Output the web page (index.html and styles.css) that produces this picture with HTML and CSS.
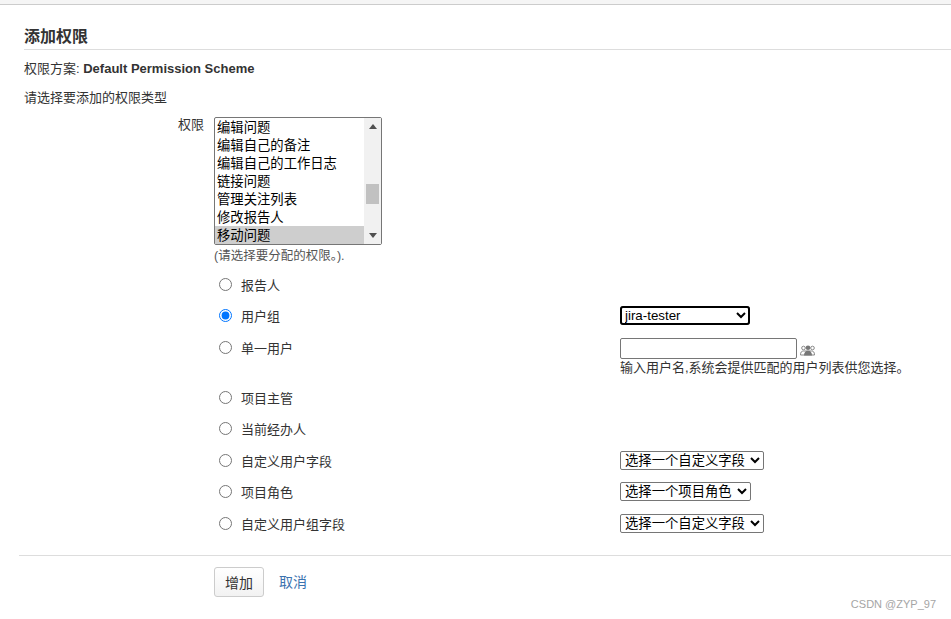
FILE: index.html
```html
<!DOCTYPE html>
<html lang="zh-CN">
<head>
    <meta charset="UTF-8">
    <title>添加权限</title>
    <link rel="stylesheet" href="styles.css">
</head>
<body>
    <div class="topbar"></div>
    <div class="content">
        <h2 class="title">添加权限</h2>
        <p class="scheme">权限方案: <b>Default Permission Scheme</b></p>
        <p class="intro">请选择要添加的权限类型</p>
    </div>
    <form class="perm-form">
        <div class="perm-row">
            <div class="perm-label">权限</div>
            <div class="perm-field">
                <div class="perm-list" role="listbox">
                    <div class="perm-options">
                        <div class="perm-option">编辑问题</div>
                        <div class="perm-option">编辑自己的备注</div>
                        <div class="perm-option">编辑自己的工作日志</div>
                        <div class="perm-option">链接问题</div>
                        <div class="perm-option">管理关注列表</div>
                        <div class="perm-option">修改报告人</div>
                        <div class="perm-option selected">移动问题</div>
                    </div>
                    <div class="scrollbar">
                        <div class="scroll-btn"><span class="arrow-up"></span></div>
                        <div class="scroll-track"><div class="scroll-thumb"></div></div>
                        <div class="scroll-btn"><span class="arrow-down"></span></div>
                    </div>
                </div>
                <div class="perm-hint">(请选择要分配的权限。).</div>
            </div>
        </div>

        <table class="type-table">
            <tr>
                <td class="type-radio"><input type="radio" name="type"></td>
                <td class="type-name">报告人</td>
                <td></td>
            </tr>
            <tr class="row-tall">
                <td class="type-radio"><input type="radio" name="type" checked></td>
                <td class="type-name">用户组</td>
                <td class="type-pick">
                    <select class="pick pick-focus"><option>jira-tester</option></select>
                </td>
            </tr>
            <tr class="row-user">
                <td class="type-radio"><input type="radio" name="type"></td>
                <td class="type-name">单一用户</td>
                <td class="type-pick">
                    <div class="user-line">
                        <input type="text" class="user-input">
                        <svg class="user-icon" width="16" height="11" viewBox="0 0 16 11">
                            <circle cx="3.500" cy="3" r="1.800" fill="#fff" stroke="#888"/>
                            <circle cx="12.500" cy="3" r="1.800" fill="#fff" stroke="#888"/>
                            <path d="M.5 10c0-2.800 1-4 3-4h8c2 0 3 1.200 3 4z" fill="#fff" stroke="#888"/>
                            <circle cx="8" cy="2.800" r="2.300" fill="#777"/>
                            <path d="M4 10.500c0-3 1.500-4.800 4-4.800s4 1.800 4 4.800z" fill="#777"/>
                        </svg>
                    </div>
                    <div class="user-help">输入用户名,系统会提供匹配的用户列表供您选择。</div>
                </td>
            </tr>
            <tr>
                <td class="type-radio"><input type="radio" name="type"></td>
                <td class="type-name">项目主管</td>
                <td></td>
            </tr>
            <tr class="row-tall">
                <td class="type-radio"><input type="radio" name="type"></td>
                <td class="type-name">当前经办人</td>
                <td></td>
            </tr>
            <tr>
                <td class="type-radio"><input type="radio" name="type"></td>
                <td class="type-name">自定义用户字段</td>
                <td class="type-pick"><select class="pick pick-wide"><option>选择一个自定义字段</option></select></td>
            </tr>
            <tr class="row-tall">
                <td class="type-radio"><input type="radio" name="type"></td>
                <td class="type-name">项目角色</td>
                <td class="type-pick"><select class="pick pick-role"><option>选择一个项目角色</option></select></td>
            </tr>
            <tr>
                <td class="type-radio"><input type="radio" name="type"></td>
                <td class="type-name">自定义用户组字段</td>
                <td class="type-pick"><select class="pick pick-wide"><option>选择一个自定义字段</option></select></td>
            </tr>
        </table>

        <div class="actions">
            <button type="button" class="btn">增加</button>
            <a href="#" class="cancel">取消</a>
        </div>
    </form>
    <div class="watermark">CSDN @ZYP_97</div>
</body>
</html>
```

FILE: styles.css
```css
html, body {
    height: 100%;
}
body {
    margin: 0;
    overflow: hidden;
    position: relative;
    background-color: #fff;
    color: #333;
    font-family: "Liberation Sans", "Noto Sans CJK SC", sans-serif;
    font-size: 13px;
    line-height: 18px;
}
.topbar {
    height: 4px;
    background-color: #f5f5f5;
    border-bottom: 1px solid #ccc;
}
.content {
    padding-left: 24px;
}
.title {
    margin: 0;
    padding-top: 22px;
    height: 22px;
    line-height: 20px;
    font-size: 16px;
    color: #333;
    border-bottom: 1px solid #ddd;
}
.scheme {
    margin: 10px 0 0;
}
.intro {
    margin: 11px 0 0;
}

.perm-row {
    display: flex;
    margin-top: 10px;
}
.perm-label {
    width: 204px;
    margin-top: -1px;
    text-align: right;
}
.perm-field {
    margin-left: 10px;
}
.perm-list {
    display: flex;
    box-sizing: border-box;
    width: 168px;
    height: 128px;
    border: 1px solid #767676;
    border-radius: 2px;
    background-color: #fff;
    color: #000;
    font-size: 13.333px;
}
.perm-options {
    flex: 1;
}
.perm-option {
    box-sizing: border-box;
    height: 18px;
    line-height: 18px;
    padding: 1px 2px 0;
}
.perm-option.selected {
    background-color: #cecece;
}
.scrollbar {
    display: flex;
    flex-direction: column;
    width: 17px;
    background-color: #f1f1f1;
}
.scroll-btn {
    display: flex;
    align-items: center;
    justify-content: center;
    height: 17px;
}
.arrow-up, .arrow-down {
    width: 0;
    height: 0;
    border-left: 4px solid transparent;
    border-right: 4px solid transparent;
}
.arrow-up {
    border-bottom: 5px solid #505050;
}
.arrow-down {
    border-top: 5px solid #505050;
}
.scroll-track {
    flex: 1;
    padding: 49px 2px 0;
}
.scroll-thumb {
    height: 20px;
    background-color: #c1c1c1;
}
.perm-hint {
    margin-top: 3px;
    font-size: 12.500px;
    line-height: 16px;
    color: #555;
}

.type-table {
    border-collapse: collapse;
    margin-top: 7px;
}
.type-table td {
    padding: 6px 0 0;
    height: 31px;
    box-sizing: border-box;
    vertical-align: top;
}
.type-table .row-tall td {
    height: 32px;
}
.type-table .row-user td {
    height: 50px;
}
.type-table .type-radio {
    width: 241px;
    padding: 7px 0 0 218px;
}
.type-radio input {
    display: block;
    width: 13px;
    height: 13px;
    margin: 0 0 0 1px;
}
.type-name {
    width: 379px;
}
.type-table .type-pick {
    padding-top: 4px;
}
.pick {
    display: block;
    height: 19px;
    margin: 0;
    padding: 0;
    border: 1px solid #767676;
    border-radius: 2px;
    background-color: #fff;
    color: #000;
    font-family: "Liberation Sans", "Noto Sans CJK SC", sans-serif;
    font-size: 13.333px;
}
.pick-focus {
    width: 130px;
    outline: 2px solid #000;
    outline-offset: -2px;
    border-radius: 3px;
}
.pick-wide {
    width: 144px;
}
.pick-role {
    width: 131px;
}
.user-line {
    display: flex;
    align-items: center;
    margin-bottom: 1px;
}
.user-input {
    box-sizing: border-box;
    width: 177px;
    height: 21px;
    margin: 0;
    padding: 1px 2px;
    border: 1px solid #767676;
    border-radius: 2px;
}
.user-icon {
    margin-left: 3px;
    margin-top: 3px;
}
.user-help {
    line-height: 16px;
}

.actions {
    display: flex;
    align-items: center;
    margin: 14px 0 0 19px;
    padding: 11px 0 0 195px;
    border-top: 1px solid #ddd;
}
.btn {
    box-sizing: border-box;
    width: 50px;
    height: 30px;
    padding: 0;
    border: 1px solid #ccc;
    border-radius: 3px;
    background: linear-gradient(#fff, #f2f2f2);
    color: #333;
    font-family: inherit;
    font-size: 14px;
}
.cancel {
    margin-left: 15px;
    font-size: 14px;
    color: #3b73af;
    text-decoration: none;
}
.watermark {
    position: absolute;
    right: 15px;
    bottom: 7px;
    font-size: 11px;
    line-height: 16px;
    color: #a5a5a5;
}
```
